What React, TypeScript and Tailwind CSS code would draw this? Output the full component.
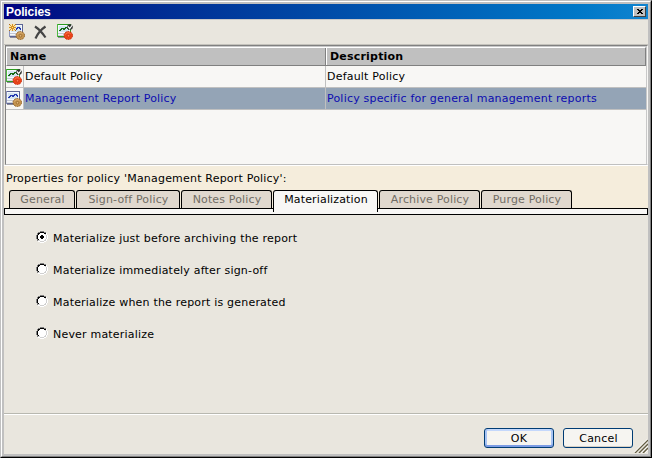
import React, { useState } from "react";

function ReportIcon({ approved = false, sparkle = false }: { approved?: boolean; sparkle?: boolean }) {
  const frame = approved ? "#2c9c20" : "#5c6494";
  const frameLight = approved ? "#50b840" : "#8c94bc";
  const gear = approved ? "#ec4418" : "#c49450";
  const gearDark = approved ? "#c83010" : "#946428";
  const gearLight = approved ? "#ff7c50" : "#e0b478";
  return (
    <svg width="16" height="16" viewBox="0 0 16 16" shapeRendering="crispEdges" className="block shrink-0">
      <path d="M0 0h14v13h-14z" fill={frame} />
      <path d="M0 0h1v13h-1z" fill={frameLight} />
      <path d="M1 1h12v10h-12z" fill="#f4f8fc" />
      <path d="M2 2h10v6h-10z" fill="#d4e4f0" />
      <path d="M2 6.500h1v-1h1v-1h2v1h1v-1h1v-1h2v1h1v1h1" fill="none" stroke={approved ? "#146c14" : "#2438b0"} />
      <path d="M1 9h7v1h-7z" fill="#c4c8d4" />
      <path d="M1 11h12v1h-12z" fill="#d0d4dc" />
      <path d="M1 13h7v1h-7z" fill="#8c8c98" />
      {sparkle && (
        <g>
          <path d="M0 0h7v7h-7z" fill="#f8e4b0" />
          <path d="M3 0h1v7h-1zM0 3h7v1h-7zM1 1h1v1h-1zM5 1h1v1h-1zM1 5h1v1h-1zM5 5h1v1h-1zM2 2h3v3h-3z" fill="#d89020" />
          <path d="M3 3h1v1h-1z" fill="#ffe880" />
          <path d="M0 0h1v1h-1zM6 0h1v1h-1zM0 6h1v1h-1zM6 6h1v1h-1z" fill="#a86c20" />
        </g>
      )}
      {approved && (
        <g shapeRendering="auto">
          <circle cx="13" cy="3" r="2.800" fill="#303430" />
          <path d="M11 2.500L12.700 4.500L15.300 1" fill="none" stroke="#fff" strokeWidth="1.200" />
        </g>
      )}
      <g shapeRendering="auto">
        <ellipse cx="11.300" cy="11.500" rx="4.300" ry="4" fill={gear} stroke={gearDark} strokeWidth="1" strokeDasharray="1.800 .8" />
        <path d="M8.500 10.500a3 2.500 0 0 1 5-1" fill="none" stroke={gearLight} strokeWidth="1" />
        <circle cx="11.500" cy="11.700" r="1.300" fill={gearLight} stroke={gearDark} strokeWidth=".8" />
      </g>
    </svg>
  );
}

function DeleteIcon() {
  return (
    <svg width="13" height="15" viewBox="0 0 13 15" className="block">
      <path d="M1 1.500C4 3.500 8.500 8 11.500 12.500M11.500 1.500C7 4.500 3.500 9 1.500 13.500" fill="none" stroke="#444444" strokeWidth="2.200" />
    </svg>
  );
}

function RadioMark({ on }: { on: boolean }) {
  return (
    <svg width="12" height="12" viewBox="0 0 12 12" shapeRendering="crispEdges" className="block shrink-0">
      <path d="M4 1h4v1h2v2h1v4h-1v2h-2v1h-4v-1h-2v-2h-1v-4h1v-2h2z" fill="#fff" />
      <path d="M4 0h4v1h-4zM2 1h2v1h-2zM8 1h2v1h-2zM1 2h1v2h-1zM0 4h1v4h-1zM1 8h1v2h-1z" fill="#808080" />
      <path d="M4 1h4v1h-4zM2 2h2v1h-2zM8 2h2v1h-2zM2 3h1v1h-1zM1 4h1v4h-1zM2 8h1v1h-1z" fill="#000" />
      <path d="M9 3h1v1h-1zM10 4h1v4h-1zM9 8h1v1h-1zM8 9h2v1h-2zM2 9h2v1h-2zM4 10h4v1h-4z" fill="#d0d0d0" />
      <path d="M10 2h1v2h-1zM11 4h1v4h-1zM10 8h1v2h-1zM8 10h2v1h-2zM2 10h2v1h-2zM4 11h4v1h-4z" fill="#fff" />
      {on && <path d="M5 4h2v1h1v2h-1v1h-2v-1h-1v-2h1z" fill="#000" />}
    </svg>
  );
}

const policies = [
  { name: "Default Policy", text: "Default Policy", approved: true },
  { name: "Management Report Policy", text: "Policy specific for general management reports", approved: false },
];

const tabs = [
  { label: "General", width: "w-[66px]" },
  { label: "Sign-off Policy", width: "w-[104px]" },
  { label: "Notes Policy", width: "w-[91px]" },
  { label: "Materialization", width: "w-[105px]" },
  { label: "Archive Policy", width: "w-[101px]" },
  { label: "Purge Policy", width: "w-[91px]" },
];

const options = [
  "Materialize just before archiving the report",
  "Materialize immediately after sign-off",
  "Materialize when the report is generated",
  "Never materialize",
];

export default function App() {
  const [tab, setTab] = useState("Materialization");
  const [choice, setChoice] = useState(0);
  return (
    <div className="h-[458px] w-[652px] overflow-hidden border border-t-[#c0c0c0] border-r-black border-b-black border-l-[#c0c0c0] font-['DejaVu_Sans',sans-serif] text-[11px] leading-[14px] tracking-[0.2px] text-black">
      <div className="h-full border border-t-white border-r-[#808080] border-b-[#808080] border-l-white">
        <div className="flex h-full flex-col border-2 border-[#c0c0c0] bg-[#e9e6de]">
          <div className="flex h-[15px] shrink-0 items-center bg-linear-to-r from-[#000080] to-[#1084d0] pr-[2px] pl-[2px]">
            <span className="flex-1 pt-px font-['Liberation_Sans',sans-serif] text-[12px] leading-[15px] font-bold tracking-[-0.1px] text-white">Policies</span>
            <button className="flex h-[11px] w-[13px] items-center justify-center border border-t-white border-r-[#404040] border-b-[#404040] border-l-white bg-[#c0c0c0]">
              <svg width="6" height="5" viewBox="0 0 6 5" shapeRendering="crispEdges">
                <path d="M0 0h2v1h2v-1h2v1h-1v1h-1v1h1v1h1v1h-2v-1h-2v1h-2v-1h1v-1h1v-1h-1v-1h-1z" fill="#000" />
              </svg>
            </button>
          </div>
          <div className="flex h-[26px] shrink-0 items-start border-t border-b border-t-[#c8c8c8] border-b-[#c4c2bc] pt-[4px] pl-[5px]">
            <ReportIcon sparkle />
            <div className="mt-px ml-[9px]"><DeleteIcon /></div>
            <div className="ml-[10px]"><ReportIcon approved /></div>
          </div>

          <div className="ml-px h-[120px] shrink-0 border border-t-[#808080] border-r-[#f8f7f5] border-b-[#c0c0c0] border-l-[#808080] bg-[#f8f7f5]">
            <div className="h-full border-t border-r border-[#c8c8c8]">
              <div className="flex h-[19px] border border-t-white border-r-[#808080] border-b-[#808080] border-l-white bg-[#c0c0c0] font-bold">
                <div className="w-[319px] border-r border-r-[#808080] pt-[2px] pl-[3px]">Name</div>
                <div className="flex-1 border-l border-l-white pt-[2px] pl-[3px]">Description</div>
              </div>
              {policies.map((p) => (
                <div key={p.name} className={p.approved ? "flex h-[22px] border-b border-[#c0c0c0]" : "flex h-[22px] border-b border-[#c0c0c0] bg-[#94a4b6] text-[#0c0cb0]"}>
                  <div className="w-[18px] border-r border-[#c0c0c0] bg-[#f8f7f5] pt-[3px]"><ReportIcon approved={p.approved} /></div>
                  <div className="w-[302px] border-r border-[#c0c0c0] pt-[4px] pl-px tracking-[0.16px] whitespace-nowrap">{p.name}</div>
                  <div className="pt-[4px] pl-px whitespace-nowrap">{p.text}</div>
                </div>
              ))}
            </div>
          </div>

          <div className="h-[43px] shrink-0 border-t border-t-white bg-[#f5eddc] pt-[6px]">
            <div className="h-[18px] pl-[2px] whitespace-nowrap">Properties for policy 'Management Report Policy':</div>
            <div className="flex gap-px pl-[5px]">
              {tabs.map((t) => (
                <button
                  key={t.label}
                  onClick={() => setTab(t.label)}
                  className={`${t.width} ${t.label === tab ? "relative z-10 h-[22px] bg-[#f8f7f5] text-black" : "h-[18px] bg-[#e0d8ce] text-[#706c64]"} flex justify-center rounded-t-[3px] border border-b-0 border-black pt-[2px] pl-px tracking-[0.15px] whitespace-nowrap`}
                >
                  {t.label}
                </button>
              ))}
            </div>
          </div>
          <div className="h-[7px] shrink-0 border border-black bg-[#f8f7f5]" />

          <div className="flex h-[198px] shrink-0 flex-col pt-[16px] pl-[32px]">
            {options.map((o, i) => (
              <button key={o} onClick={() => setChoice(i)} className="flex h-[32px] items-start text-left">
                <RadioMark on={choice === i} />
                <span className="mt-px ml-[5px] whitespace-nowrap">{o}</span>
              </button>
            ))}
          </div>

          <div className="flex flex-1 items-start justify-end border-t border-t-[#b8b8b0]">
            <div className="flex h-full flex-1 items-start justify-end border-t border-t-white pt-[13px]">
              <button className="h-[20px] w-[70px] rounded-[3px] border border-[#003c74] bg-[#f6f5f1] pt-[2px] shadow-[inset_0_-2px_0_#7c9ce4,inset_2px_0_0_#a8c4f4,inset_-2px_0_0_#a8c4f4,inset_0_2px_0_#c4d8fc]">OK</button>
              <button className="ml-[9px] h-[20px] w-[70px] rounded-[3px] border border-[#003c74] bg-[#f6f5f1] pt-[2px] pl-px shadow-[inset_0_-1px_0_#d8d0c4]">Cancel</button>
              <svg width="14" height="14" viewBox="0 0 14 14" className="mt-[11px] ml-px block">
                <path d="M1 14L14 1M5 14L14 5M9 14L14 9" stroke="#635d43" strokeWidth="1.400" />
                <path d="M0 13.500L13.500 0M7 14L14 7M11 14L14 11" stroke="#fff" strokeWidth=".8" />
              </svg>
            </div>
          </div>
        </div>
      </div>
    </div>
  );
}
